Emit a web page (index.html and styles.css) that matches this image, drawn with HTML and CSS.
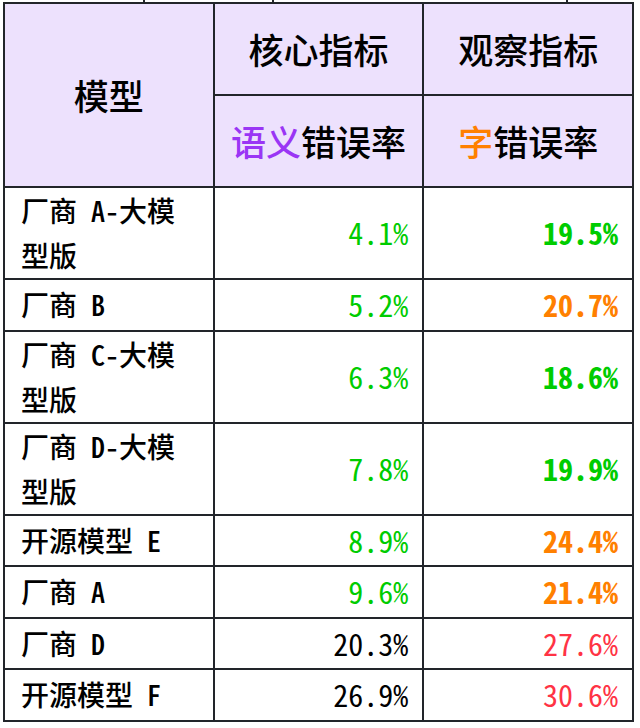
FILE: index.html
```html
<!DOCTYPE html>
<html lang="zh-CN">
<head>
<meta charset="utf-8">
<title>错误率对比</title>
<link rel="stylesheet" href="styles.css">
</head>
<body>
<div class="prev-table">
  <span class="tick t1"></span>
  <span class="tick t2"></span>
  <span class="tick t3"></span>
  <span class="tick t4"></span>
</div>
<table class="rates">
  <colgroup><col class="c"><col class="c"><col class="c"></colgroup>
  <thead>
    <tr>
      <th rowspan="2">模型</th>
      <th>核心指标</th>
      <th>观察指标</th>
    </tr>
    <tr>
      <th><span class="purple">语义</span>错误率</th>
      <th><span class="orange">字</span>错误率</th>
    </tr>
  </thead>
  <tbody>
    <tr><td class="name">厂商 A-大模型版</td><td class="num green">4.1%</td><td class="num bold green">19.5%</td></tr>
    <tr><td class="name">厂商 B</td><td class="num green">5.2%</td><td class="num bold orange">20.7%</td></tr>
    <tr><td class="name">厂商 C-大模型版</td><td class="num green">6.3%</td><td class="num bold green">18.6%</td></tr>
    <tr><td class="name">厂商 D-大模型版</td><td class="num green">7.8%</td><td class="num bold green">19.9%</td></tr>
    <tr><td class="name">开源模型 E</td><td class="num green">8.9%</td><td class="num bold orange">24.4%</td></tr>
    <tr><td class="name">厂商 A</td><td class="num green">9.6%</td><td class="num bold orange">21.4%</td></tr>
    <tr><td class="name">厂商 D</td><td class="num">20.3%</td><td class="num red">27.6%</td></tr>
    <tr><td class="name">开源模型 F</td><td class="num">26.9%</td><td class="num red">30.6%</td></tr>
  </tbody>
</table>
</body>
</html>
```

FILE: styles.css
```css
html, body {
  margin: 0;
  padding: 0;
  background: #ffffff;
}

body {
  font-family: "Noto Sans CJK SC", "Noto Sans", sans-serif;
  font-feature-settings: "hwid" 1;
  color: #000000;
}

.prev-table {
  display: flex;
  height: 2px;
  margin-left: 3px;
  width: 631px;
}

.tick {
  display: block;
  height: 2px;
  border-left: 2px solid #22252a;
}

.t1 { width: 140px; border-left: none; }
.t2 { width: 127px; }
.t3 { width: 292px; }
.t4 { width: 60px; }

.rates {
  margin-left: 3px;
  width: 631px;
  table-layout: fixed;
  border-collapse: collapse;
  border: 2px solid #22252a;
}

.rates .c {
  width: 33.33%;
}

.rates th,
.rates td {
  border: 2px solid #22252a;
}

.rates th {
  background: #ede1fd;
  font-size: 35px;
  font-weight: 500;
  line-height: 50px;
  padding: 20px 4px 20px;
  text-align: center;
  vertical-align: middle;
}

.rates td {
  padding: 0 14px 0 16px;
  vertical-align: middle;
}

.rates .name {
  font-size: 28px;
  font-weight: 500;
  line-height: 45px;
  text-align: left;
}

.rates .num {
  font-size: 30px;
  line-height: 49.5px;
  text-align: right;
  padding-right: 14px;
}

.rates .bold {
  font-weight: bold;
}

.purple { color: #9a35f5; }
.orange { color: #ff8000; }
.green { color: #00cc00; }
.red { color: #ff3344; }
```
